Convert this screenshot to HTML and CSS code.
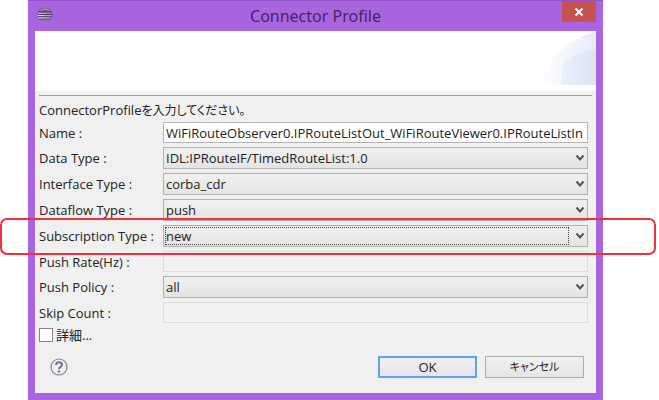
FILE: index.html
```html
<!DOCTYPE html>
<html lang="ja">
<head>
<meta charset="utf-8">
<title>Connector Profile</title>
<link rel="stylesheet" href="styles.css">
</head>
<body>
<main class="window">
  <header class="titlebar">
    <svg class="app-icon" viewBox="0 0 16 16" aria-hidden="true">
      <defs>
        <linearGradient id="orb" x1="0" y1="0" x2="0" y2="1">
          <stop offset="0" stop-color="#8d6fa8"/>
          <stop offset="0.45" stop-color="#4d3268"/>
          <stop offset="1" stop-color="#9c84b8"/>
        </linearGradient>
        <linearGradient id="shine" x1="0" y1="0" x2="1" y2="0">
          <stop offset="0" stop-color="#f0e6f4"/>
          <stop offset="1" stop-color="#a48bb8"/>
        </linearGradient>
      </defs>
      <circle cx="8" cy="8" r="7.7" fill="url(#orb)"/>
      <path d="M1 5.8h14v1H1zM0.6 8h14.8v1H0.6zM1.2 10.2h13.6v1H1.2z" fill="url(#shine)"/>
      <path d="M3.5 3.5Q8 0.5 12.5 3.5" stroke="#b79fca" fill="none"/>
    </svg>
    <h1 class="title">Connector Profile</h1>
    <button class="close" type="button" aria-label="Close">
      <svg class="close-icon" viewBox="0 0 10 10"><path d="M1.5 1.5l7 7M8.5 1.5l-7 7" stroke="#fff" stroke-width="2"/></svg>
    </button>
  </header>
  <form class="dialog">
    <div class="banner">
      <svg class="banner-art" viewBox="0 0 60 54" aria-hidden="true">
        <defs>
          <linearGradient id="outer" x1="0" y1="0" x2="1" y2="0">
            <stop offset="0" stop-color="#fff"/>
            <stop offset="0.3" stop-color="#f8fafd"/>
            <stop offset="1" stop-color="#e5ebf8"/>
          </linearGradient>
          <linearGradient id="inner" x1="0" y1="0" x2="1" y2="0">
            <stop offset="0" stop-color="#ebf0fa"/>
            <stop offset="1" stop-color="#dbe3f5"/>
          </linearGradient>
        </defs>
        <path d="M2 54Q18 12 60 0V54z" fill="url(#outer)"/>
        <path d="M25 54V36Q37 21 60 18V54z" fill="url(#inner)"/>
      </svg>
    </div>
    <div class="body">
      <p class="message">ConnectorProfile<span class="kana">を入力してください。</span></p>
      <div class="fields">
        <div class="row">
          <label class="label" for="name">Name :</label>
          <input class="text" id="name" type="text" value="WiFiRouteObserver0.IPRouteListOut_WiFiRouteViewer0.IPRouteListIn">
        </div>
        <div class="row">
          <label class="label" for="data">Data Type :</label>
          <div class="combo">
            <select class="select" id="data"><option>IDL:IPRouteIF/TimedRouteList:1.0</option></select>
            <svg class="chevron" viewBox="0 0 10 8"><path d="M1.5 1.5l3.5 4 3.5-4"/></svg>
          </div>
        </div>
        <div class="row">
          <label class="label" for="interface">Interface Type :</label>
          <div class="combo">
            <select class="select" id="interface"><option>corba_cdr</option></select>
            <svg class="chevron" viewBox="0 0 10 8"><path d="M1.5 1.5l3.5 4 3.5-4"/></svg>
          </div>
        </div>
        <div class="row">
          <label class="label" for="dataflow">Dataflow Type :</label>
          <div class="combo">
            <select class="select" id="dataflow"><option>push</option></select>
            <svg class="chevron" viewBox="0 0 10 8"><path d="M1.5 1.5l3.5 4 3.5-4"/></svg>
          </div>
        </div>
        <div class="row">
          <label class="label" for="subscription">Subscription Type :</label>
          <div class="combo combo-focused">
            <select class="select" id="subscription"><option>new</option></select>
            <svg class="chevron" viewBox="0 0 10 8"><path d="M1.5 1.5l3.5 4 3.5-4"/></svg>
          </div>
          <div class="highlight"></div>
        </div>
        <div class="row">
          <label class="label" for="rate">Push Rate(Hz) :</label>
          <input class="text" id="rate" type="text" disabled>
        </div>
        <div class="row">
          <label class="label" for="policy">Push Policy :</label>
          <div class="combo">
            <select class="select" id="policy"><option>all</option></select>
            <svg class="chevron" viewBox="0 0 10 8"><path d="M1.5 1.5l3.5 4 3.5-4"/></svg>
          </div>
        </div>
        <div class="row">
          <label class="label" for="skip">Skip Count :</label>
          <input class="text" id="skip" type="text" disabled>
        </div>
      </div>
      <label class="detail"><input class="check" type="checkbox">詳細...</label>
    </div>
    <footer class="footer">
      <button class="help" type="button" aria-label="Help">
        <svg class="help-icon" viewBox="0 0 18 18" fill="none">
          <circle cx="9" cy="9" r="8" stroke="#7e8596" stroke-width="1.2"/>
          <path d="M6 7Q6 4.2 9 4.2T12 6.8Q12 8.2 10.2 9.2Q9 9.9 9 11.3" stroke="#6b7391" stroke-width="2"/>
          <circle cx="9" cy="13.6" r="1.2" fill="#6b7391"/>
        </svg>
      </button>
      <button class="button button-default" type="button">OK</button>
      <button class="button button-cancel" type="button">キャンセル</button>
    </footer>
  </form>
</main>
</body>
</html>
```
FILE: styles.css
```css
* {
  box-sizing: border-box;
}

body {
  margin: 0;
  background: #fff;
  color: #222;
  font: 13px/20px "Open Sans", "Noto Sans CJK JP", sans-serif;
}

button,
input,
select {
  margin: 0;
  color: inherit;
  font: inherit;
}

.window {
  margin: 0 56px 0 28px;
  padding: 0 7px 7px;
  border-top: 1px solid #9150cc;
  background: #a965e0;
}

.titlebar {
  display: grid;
  grid-template-columns: 34px 1fr 34px;
  height: 30px;
}

.app-icon {
  width: 16px;
  height: 16px;
  margin: 6px 0 0 2px;
}

.title {
  margin: 0;
  color: #44265f;
  font: 400 16px/30px "Noto Sans", sans-serif;
  text-align: center;
}

.close {
  display: grid;
  place-items: center;
  height: 21px;
  padding: 0;
  border: 0;
  background: #c75050;
}

.close-icon {
  width: 10px;
  height: 10px;
}

.dialog {
  background: #f0f0f0;
}

.banner {
  display: flex;
  justify-content: flex-end;
  height: 60px;
  background: #fff;
}

.banner-art {
  width: 60px;
  height: 54px;
}

.body {
  margin: 4px 4px 0;
  padding-right: 4px;
  border-top: 1px solid #a0a0a0;
}

.message {
  margin: 4px 0 2px;
}

.kana {
  font-size: 12px;
  font-feature-settings: "palt";
  line-height: 16px;
}

.fields {
  display: flex;
  flex-direction: column;
  gap: 4px;
}

.row {
  position: relative;
  display: grid;
  grid-template-columns: 124px 1fr;
  align-items: center;
}

.label {
  white-space: nowrap;
}

.text {
  width: 100%;
  height: 21px;
  padding: 0 1px 0 2px;
  border: 1px solid #b4b4b4;
  background: #fff;
}

.text:disabled {
  border-color: #dcdcdc;
  background: #f0f0f0;
}

.combo {
  position: relative;
  display: grid;
}

.select {
  appearance: none;
  width: 100%;
  height: 22px;
  padding: 0 24px 0 2px;
  border: 1px solid #b0b0b0;
  border-radius: 0;
  background: linear-gradient(#f0f0f0, #e4e4e4);
}

.combo-focused::after {
  position: absolute;
  inset: 2px 19px 2px 2px;
  border: 1px dotted #444;
  content: "";
  pointer-events: none;
}

.chevron {
  position: absolute;
  top: 7px;
  right: 3px;
  width: 10px;
  height: 8px;
  fill: none;
  stroke: #555;
  stroke-width: 2;
  pointer-events: none;
}

.highlight {
  position: absolute;
  z-index: 1;
  inset: -7px -68px -8px -39px;
  border: 2px solid #f0303a;
  border-radius: 7px;
  pointer-events: none;
}

.detail {
  display: flex;
  align-items: center;
  gap: 3px;
  width: max-content;
  margin-top: 2px;
}

.check {
  appearance: none;
  width: 14px;
  height: 14px;
  border: 1px solid #858585;
  background: #fff;
}

.footer {
  display: flex;
  gap: 8px;
  padding: 11px 12px 15px 15px;
}

.help {
  margin-right: auto;
  padding: 0;
  border: 0;
  background: none;
}

.help-icon {
  display: block;
  width: 18px;
  height: 18px;
}

.button {
  width: 99px;
  height: 22px;
  padding: 0;
  border: 1px solid #acacac;
  background: linear-gradient(#f1f1f1, #e5e5e5);
}

.button-default {
  border: 2px solid #5ba7ee;
  line-height: 18px;
}

.button-cancel {
  font-size: 11px;
  font-feature-settings: "palt";
}
```
